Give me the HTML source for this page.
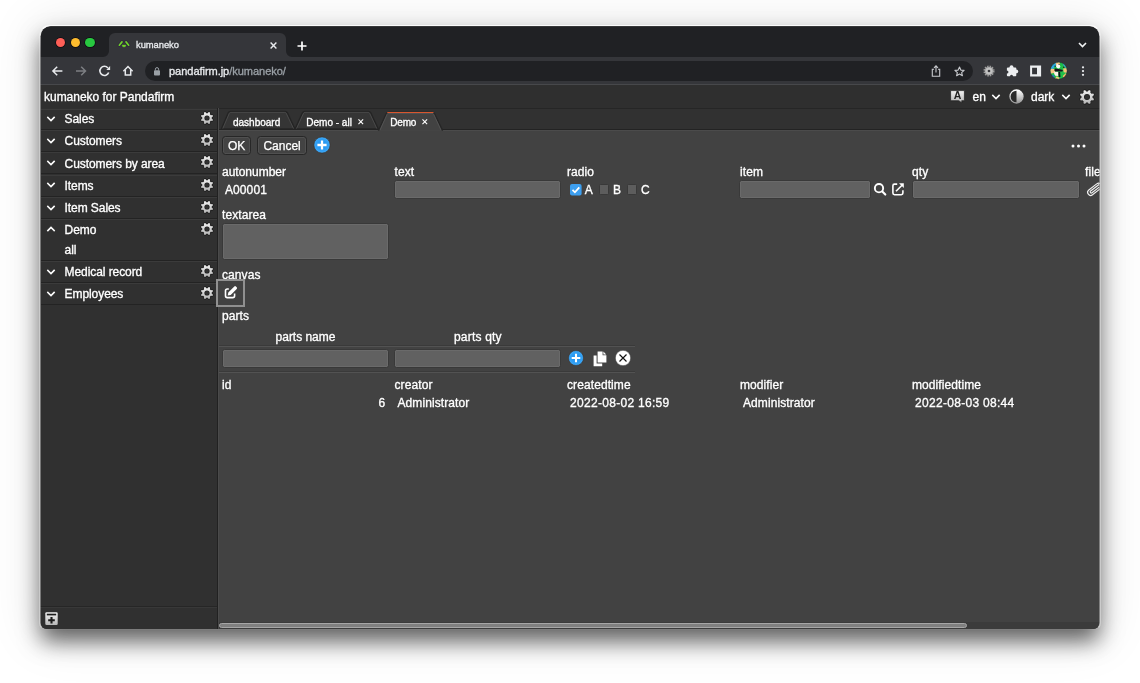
<!DOCTYPE html>
<html lang="en">
<head>
<meta charset="utf-8">
<title>kumaneko</title>
<style>
*{box-sizing:border-box;margin:0;padding:0}
html,body{width:1140px;height:683px;overflow:hidden;background:#fff}
body{position:relative;font-family:"Liberation Sans",Arial,sans-serif;font-size:12px;color:#fff;line-height:1}
.shadow{position:absolute;left:40.6px;top:26.4px;width:1058.8px;height:602.5px;border-radius:10px 10px 6px 6px;background:#333;
 box-shadow:0 12px 22px rgba(0,0,0,.6),0 4px 50px 6px rgba(0,0,0,.1)}
.ring{position:absolute;left:39.4px;top:25.2px;width:1061.2px;height:604.4px;border:1.2px solid rgba(255,255,255,.34);border-top-color:rgba(255,255,255,.85);border-bottom-color:rgba(255,255,255,.06);border-radius:11px 11px 7px 7px}
.win{will-change:transform;position:absolute;left:0;top:0;width:1140px;height:683px;clip-path:inset(26.4px 40.6px 54.1px 40.6px round 10px 10px 6px 6px);background:#424242}
.bg{position:absolute}
.t{position:absolute;white-space:pre;line-height:14px;height:14px;-webkit-text-stroke:.32px currentColor}
.f{letter-spacing:.09px}
svg{position:absolute;overflow:visible}
.row{position:absolute;left:41px;width:176px;height:22px;border-top:1px solid #3b3b3b;border-bottom:1px solid #232323}
.inp{position:absolute;height:19.1px;background:#616161;border:1px solid #393939;border-radius:2.5px;box-shadow:inset 0 0 0 1px #6a6a6a}
.btn{position:absolute;top:135.6px;height:19px;border:1.2px solid #272727;border-radius:3.5px;background:#434343;box-shadow:inset 0 0 0 1px #505050;font-size:12px;line-height:18.2px;text-align:center;-webkit-text-stroke:.25px currentColor}
</style>
</head>
<body>
<svg width="0" height="0" style="left:-10px;top:-10px">
<defs>
<linearGradient id="gg" x1="0" y1="0" x2="0" y2="1"><stop offset="0" stop-color="#f2f2f2"/><stop offset="1" stop-color="#b4b4b4"/></linearGradient>
<symbol id="gear" viewBox="-8 -8 16 16" overflow="visible"><path d="M4.75 0.71L6.08 1.66L5.47 3.12L3.86 2.85L2.85 3.86L3.12 5.47L1.66 6.08L0.71 4.75L-0.71 4.75L-1.66 6.08L-3.12 5.47L-2.85 3.86L-3.86 2.85L-5.47 3.12L-6.08 1.66L-4.75 0.71L-4.75 -0.71L-6.08 -1.66L-5.47 -3.12L-3.86 -2.85L-2.85 -3.86L-3.12 -5.47L-1.66 -6.08L-0.71 -4.75L0.71 -4.75L1.66 -6.08L3.12 -5.47L2.85 -3.86L3.86 -2.85L5.47 -3.12L6.08 -1.66L4.75 -0.71ZM2.60 0A2.60 2.60 0 1 0 -2.60 0A2.60 2.60 0 1 0 2.60 0Z" fill="url(#gg)" fill-rule="evenodd" stroke="#1c1c1c" stroke-width="1.2" stroke-linejoin="round" paint-order="stroke"/></symbol>
<symbol id="chev" viewBox="-5 -5 10 10" overflow="visible"><path d="M-3.1 -1.5L0 1.6L3.1 -1.5" fill="none" stroke="#fff" stroke-width="1.6" stroke-linecap="square"/></symbol>
</defs>
</svg>
<div class="shadow"></div><div class="ring"></div>
<div class="win">
<!-- chrome tab strip -->
<div class="bg" style="left:40px;top:26px;width:1060px;height:31px;background:#202124;border-top:1.5px solid #3c3d40"></div>
<div class="bg" style="left:40px;top:57px;width:1060px;height:27.5px;background:#35363a;border-bottom:1px solid #47484b"></div>
<div class="bg" style="left:109px;top:32.9px;width:177px;height:25px;background:#35363a;border-radius:6px 6px 0 0"></div>
<svg style="left:103px;top:51px" width="6" height="6"><path d="M0 6H6V0A6 6 0 0 1 0 6Z" fill="#35363a"/></svg>
<svg style="left:286px;top:51px" width="6" height="6"><path d="M6 6H0V0A6 6 0 0 0 6 6Z" fill="#35363a"/></svg>
<div class="bg" style="left:55.8px;top:37.8px;width:9.6px;height:9.6px;border-radius:50%;background:#fe5f57;box-shadow:0 0 0 .7px #0d0d12"></div>
<div class="bg" style="left:70.5px;top:37.8px;width:9.6px;height:9.6px;border-radius:50%;background:#febc2e;box-shadow:0 0 0 .7px #0d0d12"></div>
<div class="bg" style="left:85.2px;top:37.8px;width:9.6px;height:9.6px;border-radius:50%;background:#28c840;box-shadow:0 0 0 .7px #0d0d12"></div>
<!-- favicon -->
<svg style="left:116px;top:38px" width="16" height="12" viewBox="116 38 16 12"><g fill="none" stroke="#2b1d3d" stroke-width="3" stroke-linecap="round" opacity=".8"><path d="M119.3 45.2L122 41.9"/><path d="M126 41.9L128.7 45.2"/><path d="M122.8 45.4H125.2"/></g><g fill="none" stroke="#6fd22b" stroke-width="1.7" stroke-linecap="round"><path d="M119.3 45.2L122 41.9"/><path d="M126 41.9L128.7 45.2"/></g><path d="M122.1 45A1.9 1.9 0 0 0 125.9 45Z" fill="#6fd22b" stroke="#6fd22b" stroke-width=".5" stroke-linejoin="round"/></svg>
<div class="t" style="left:136px;top:38px;font-size:9.4px;color:#e8eaed;letter-spacing:-.05px">kumaneko</div>
<svg style="left:270.3px;top:41.9px" width="7" height="7" viewBox="0 0 7 7"><path d="M.6 .6L6.4 6.4M6.4 .6L.6 6.4" stroke="#e8eaed" stroke-width="1.45"/></svg>
<svg style="left:297px;top:40.5px" width="10" height="10" viewBox="0 0 10 10"><path d="M5 .5V9.5M.5 5H9.5" stroke="#fff" stroke-width="1.7"/></svg>
<svg style="left:1078.3px;top:42.4px" width="9" height="6" viewBox="0 0 9 6"><path d="M1 1L4.5 4.5L8 1" fill="none" stroke="#f1f3f4" stroke-width="1.6"/></svg>
<!-- nav icons -->
<svg style="left:52px;top:65.5px" width="11" height="10" viewBox="0 0 11 10"><path d="M5.2 .7L.9 5L5.2 9.3M1 5H10.4" fill="none" stroke="#e8eaed" stroke-width="1.5"/></svg>
<svg style="left:76px;top:65.5px" width="11" height="10" viewBox="0 0 11 10"><path d="M5.2 .7L9.5 5L5.2 9.3M9.4 5H0" fill="none" stroke="#7d7f83" stroke-width="1.5"/></svg>
<svg style="left:98px;top:64px" width="14" height="14" viewBox="98 64 14 14"><path d="M108.7 72.5A4.55 4.55 0 1 1 107.9 67.9" fill="none" stroke="#e8eaed" stroke-width="1.6"/><path d="M110.1 65.9V69.9H106.3Z" fill="#e8eaed"/></svg>
<svg style="left:121px;top:64px" width="14" height="14" viewBox="121 64 14 14"><path d="M123.4 71.3L128 66.6L132.6 71.3" fill="none" stroke="#e8eaed" stroke-width="1.5" stroke-linejoin="miter"/><path d="M125.3 70V74.9H130.7V70" fill="none" stroke="#e8eaed" stroke-width="1.5"/></svg>
<!-- url bar -->
<div class="bg" style="left:144.5px;top:60.5px;width:828px;height:20.5px;border-radius:10.3px;background:#202124"></div>
<svg style="left:154.2px;top:66.8px" width="6" height="8.4" viewBox="0 0 6 8.4"><rect x="0" y="3.2" width="6" height="5.2" rx=".9" fill="#9aa0a6"/><path d="M1.4 3.4V2.2A1.6 1.6 0 0 1 4.6 2.2V3.4" fill="none" stroke="#9aa0a6" stroke-width="1"/></svg>
<div class="t" style="left:169px;top:64px;font-size:11.05px;color:#e8eaed;letter-spacing:-.05px">pandafirm.jp<span style="color:#9aa0a6">/kumaneko/</span></div>
<!-- share -->
<svg style="left:931px;top:65px" width="10" height="12" viewBox="0 0 10 12"><path d="M3 4.2H1.3V11.2H8.7V4.2H7" fill="none" stroke="#c8cace" stroke-width="1.1"/><path d="M5 7.6V1.2M3 2.9L5 .9L7 2.9" fill="none" stroke="#c8cace" stroke-width="1.1"/></svg>
<!-- star -->
<svg style="left:954px;top:65.5px" width="11" height="11" viewBox="0 0 11 11"><path d="M5.5 1.1L6.85 4.1L10.1 4.4L7.65 6.55L8.4 9.75L5.5 8.05L2.6 9.75L3.35 6.55L.9 4.4L4.15 4.1Z" fill="none" stroke="#c8cace" stroke-width="1.1" stroke-linejoin="round"/></svg>
<!-- ext gear -->
<svg style="left:982.6px;top:64.8px" width="12" height="12" viewBox="-6 -6 12 12"><circle r="4.7" fill="none" stroke="#9c9c9c" stroke-width="1.7" stroke-dasharray="1.5 .96"/><circle r="4.1" fill="#b4b4b4"/><circle r="3" fill="#c4c4c4"/><circle r="1.35" fill="#3a3a3e"/></svg>
<!-- puzzle -->
<svg style="left:1005px;top:64px" width="15" height="14" viewBox="1005 64 15 14"><rect x="1006.9" y="67.5" width="9.4" height="8.8" rx="1" fill="#eceef0"/><circle cx="1011.5" cy="67.3" r="1.95" fill="#eceef0"/><circle cx="1016.3" cy="71.4" r="1.9" fill="#eceef0"/><circle cx="1006.9" cy="72" r="1.55" fill="#35363a"/><circle cx="1011.5" cy="76.4" r="1.55" fill="#35363a"/></svg>
<!-- side panel -->
<svg style="left:1029px;top:64px" width="14" height="14" viewBox="1029 64 14 14"><path d="M1030.1 65.6H1041.1V76.4H1030.1ZM1032.1 67.7V74.3H1037V67.7Z" fill="#eceef0" fill-rule="evenodd"/></svg>
<!-- avatar -->
<svg style="left:1050.4px;top:62.2px" width="17.4" height="17.4" viewBox="-8.7 -8.7 17.4 17.4"><defs><clipPath id="avc"><circle r="8.45"/></clipPath></defs><g clip-path="url(#avc)"><rect x="-9" y="-9" width="18" height="18" fill="#1fbf4a"/><path d="M-9 -9H-2L-3 -5L-6 -1.5L-9 -2.5Z" fill="#2aa7e0"/><path d="M3.5 -9H9V-2.5L6 -3.5L4.5 -6Z" fill="#3aa9d8"/><path d="M-9 -2L-4 -1.6L-3.5 2L-9 3.2Z" fill="#f5c583"/><path d="M-3.2 -9H1.2V-5.5L-2.6 -5Z" fill="#f5c583"/><path d="M4.5 -2.2L9 -2.6V2.2L5 1.6Z" fill="#f6bf78"/><path d="M-2 5.5L1 7L0 9H-4.5Z" fill="#f3cf7a"/><path d="M4 5.2L7 2.6L8.4 4.2L5 7.4Z" fill="#f6b866"/><path d="M-8 5L-5 4L-4 7.5L-6.5 7Z" fill="#2a78c8"/><ellipse cx="-.5" cy="-4.5" rx="2" ry="2.2" fill="#fbf7f2"/><path d="M-4.4 .8L-.3 1L-.4 5.4L-3.4 5L-4.6 3Z" fill="#fbf3e8"/><path d="M-4.2 -1.6Q-4 -2.4 -3 -2.2L3.4 -.9Q4.4 -.6 4 .3Q3.6 1 2.6 .9L-3.4 .8Q-4.4 .6 -4.2 -.4Z" fill="#14101a"/><path d="M-.3 1.2L1.4 1.4L1.8 6.4L.2 6.6L-.2 4Z" fill="#14101a"/><circle cx="-3.6" cy="-4.5" r=".65" fill="#111"/><circle cx=".4" cy="-6.4" r=".6" fill="#221"/><circle cx="5" cy="-3.4" r=".75" fill="#221"/></g><circle r="8.5" fill="none" stroke="#221a2c" stroke-width=".6" opacity=".75"/></svg>
<!-- kebab -->
<svg style="left:1080.6px;top:66px" width="4" height="10" viewBox="0 0 4 10"><circle cx="2" cy="1.3" r="1.15" fill="#e8eaed"/><circle cx="2" cy="5.1" r="1.15" fill="#e8eaed"/><circle cx="2" cy="8.8" r="1.15" fill="#e8eaed"/></svg>
<!-- app header -->
<div class="bg" style="left:40px;top:85px;width:1060px;height:23.6px;background:#2f2f2f;border-bottom:1.6px solid #1c1c1c"></div>
<div class="t" style="left:44px;top:90px;font-size:12px;letter-spacing:-.02px">kumaneko for Pandafirm</div>
<!-- translate icon -->
<svg style="left:950.4px;top:90.4px" width="15" height="13.4" viewBox="0 0 15 13.4"><path d="M.6 .6H14.4V10.7H11.7L12 13L8.8 10.7H.6Z" fill="url(#gg)" stroke="#1d1d1d" stroke-width=".7" stroke-linejoin="round"/><text x="7.5" y="9.3" font-family="Liberation Sans, sans-serif" font-size="10.5" font-weight="bold" text-anchor="middle" fill="#222">A</text></svg>
<div class="t" style="left:972.5px;top:90px;font-size:12px">en</div>
<svg style="left:990.5px;top:92px" width="10" height="10"><use href="#chev"/></svg>
<svg style="left:1008.8px;top:88.9px" width="15" height="15" viewBox="-7.5 -7.5 15 15"><defs><linearGradient id="hg" x1="0" y1="0" x2="0" y2="1"><stop offset="0" stop-color="#fff"/><stop offset="1" stop-color="#9a9a9a"/></linearGradient></defs><circle r="6.5" fill="#2a2a2a" stroke="url(#hg)" stroke-width="1.3"/><path d="M0 -6.4A6.4 6.4 0 0 1 0 6.4Z" fill="url(#hg)"/></svg>
<div class="t" style="left:1031px;top:90px;font-size:12px">dark</div>
<svg style="left:1061px;top:92px" width="10" height="10"><use href="#chev"/></svg>
<svg style="left:1078.7px;top:88.7px" width="16" height="16" viewBox="-6.9 -6.9 13.8 13.8"><use href="#gear" x="-8" y="-8" width="16" height="16"/></svg>
<!-- sidebar -->
<div class="bg" style="left:40px;top:108px;width:177px;height:521px;background:#303030"></div>
<div class="bg" style="left:217px;top:108px;width:1.1px;height:521px;background:#212121"></div><div class="bg" style="left:218.1px;top:108px;width:1.1px;height:521px;background:#4a4a4a"></div>
<div class="row" style="top:109.0px;height:21.16px"></div>
<svg style="left:45.9px;top:113.9px" width="10" height="10"><use href="#chev"/></svg>
<div class="t" style="left:64.6px;top:112.2px;letter-spacing:-.08px">Sales</div>
<svg style="left:199.2px;top:110.0px" width="16" height="16"><use href="#gear"/></svg>
<div class="row" style="top:130.2px;height:22.16px"></div>
<svg style="left:45.9px;top:136.1px" width="10" height="10"><use href="#chev"/></svg>
<div class="t" style="left:64.6px;top:134.4px;letter-spacing:-.08px">Customers</div>
<svg style="left:199.2px;top:132.2px" width="16" height="16"><use href="#gear"/></svg>
<div class="row" style="top:152.3px;height:22.16px"></div>
<svg style="left:45.9px;top:158.2px" width="10" height="10"><use href="#chev"/></svg>
<div class="t" style="left:64.6px;top:156.5px;letter-spacing:-.08px">Customers by area</div>
<svg style="left:199.2px;top:154.3px" width="16" height="16"><use href="#gear"/></svg>
<div class="row" style="top:174.5px;height:22.16px"></div>
<svg style="left:45.9px;top:180.4px" width="10" height="10"><use href="#chev"/></svg>
<div class="t" style="left:64.6px;top:178.7px;letter-spacing:-.08px">Items</div>
<svg style="left:199.2px;top:176.5px" width="16" height="16"><use href="#gear"/></svg>
<div class="row" style="top:196.6px;height:22.16px"></div>
<svg style="left:45.9px;top:202.5px" width="10" height="10"><use href="#chev"/></svg>
<div class="t" style="left:64.6px;top:200.8px;letter-spacing:-.08px">Item Sales</div>
<svg style="left:199.2px;top:198.6px" width="16" height="16"><use href="#gear"/></svg>
<div class="row" style="top:218.8px;height:42.10px"></div>
<svg style="left:45.9px;top:223.5px" width="10" height="10"><use href="#chev" transform="rotate(180 5 5)"/></svg>
<div class="t" style="left:64.6px;top:223.0px;letter-spacing:-.08px">Demo</div>
<svg style="left:199.2px;top:220.8px" width="16" height="16"><use href="#gear"/></svg>
<div class="row" style="top:260.8px;height:22.16px"></div>
<svg style="left:45.9px;top:266.7px" width="10" height="10"><use href="#chev"/></svg>
<div class="t" style="left:64.6px;top:265.0px;letter-spacing:-.08px">Medical record</div>
<svg style="left:199.2px;top:262.8px" width="16" height="16"><use href="#gear"/></svg>
<div class="row" style="top:282.9px;height:22.16px"></div>
<svg style="left:45.9px;top:288.8px" width="10" height="10"><use href="#chev"/></svg>
<div class="t" style="left:64.6px;top:287.1px;letter-spacing:-.08px">Employees</div>
<svg style="left:199.2px;top:284.9px" width="16" height="16"><use href="#gear"/></svg>
<div class="t" style="left:64.5px;top:243.2px">all</div>
<div class="bg" style="left:40px;top:606px;width:177px;height:2px;background:#262626;border-bottom:1px solid #383838"></div>
<svg style="left:45.2px;top:611.9px" width="13" height="13.4" viewBox="0 0 13 13.4"><defs><linearGradient id="ig" x1="0" y1="0" x2="0" y2="1"><stop offset="0" stop-color="#f4f4f4"/><stop offset="1" stop-color="#b8b8b8"/></linearGradient></defs><rect x=".3" y=".3" width="12.4" height="12.8" rx="1.3" fill="url(#ig)"/><rect x="1.8" y="1.7" width="9.4" height="1.7" fill="#1c1c1c"/><path d="M6.5 5V11.6M3.2 8.3H9.8" stroke="#1c1c1c" stroke-width="2.1"/></svg>
<!-- content tab bar -->
<div class="bg" style="left:219px;top:108px;width:881px;height:22px;background:#313131;border-top:1px solid #262626"></div>
<div class="bg" style="left:219px;top:130px;width:881px;height:499px;background:#424242"></div>
<div class="bg" style="left:219px;top:128.6px;width:881px;height:1.1px;background:#232323"></div>
<div class="bg" style="left:219px;top:129.7px;width:881px;height:1px;background:#4b4b4b"></div>
<svg style="left:219px;top:108px" width="240" height="24" viewBox="219 108 240 24">
<path d="M221.4 129L228.4 112.6Q229 111.4 230.4 111.4H285.2Q286.6 111.4 287.2 112.6L294.9 129Z" fill="#353535" stroke="#242424" stroke-width="1.5"/>
<path d="M222.8 128.6L229.4 113.2Q229.8 112.4 230.8 112.4H284.8Q285.8 112.4 286.2 113.2L293.5 128.6" fill="none" stroke="#4c4c4c" stroke-width=".9"/>
<path d="M295.1 129L302.6 112.6Q303.2 111.4 304.6 111.4H368.6Q370 111.4 370.6 112.6L378.2 129Z" fill="#353535" stroke="#242424" stroke-width="1.5"/>
<path d="M296.5 128.6L303.6 113.2Q304 112.4 305 112.4H368.2Q369.2 112.4 369.6 113.2L376.8 128.6" fill="none" stroke="#4c4c4c" stroke-width=".9"/>
<path d="M378.8 130.8L386.3 113.6Q387 112.4 388.5 112.4H432.3Q433.8 112.4 434.5 113.6L442.2 130.8Z" fill="#424242"/>
<path d="M378.4 130.6L386.3 113.6Q387 112.4 388.5 112.4H432.3Q433.8 112.4 434.5 113.6L442.6 130.6" fill="none" stroke="#262626" stroke-width="1.4"/>
<path d="M380 130.2L387.2 114.2Q387.6 113.4 388.7 113.4H432.1Q433.2 113.4 433.6 114.2L441 130.2" fill="none" stroke="#555" stroke-width=".9"/>
<path d="M387.3 112.5H433.5" stroke="#d9562e" stroke-width="1.2"/>
</svg>
<div class="t" style="left:233px;top:116.2px;font-size:10px">dashboard</div>
<div class="t" style="left:306.3px;top:116.2px;font-size:10px">Demo - all</div>
<svg style="left:357.8px;top:118.7px" width="5.6" height="5.6" viewBox="0 0 6 6"><path d="M.5 .5L5.5 5.5M5.5 .5L.5 5.5" stroke="#fff" stroke-width="1.2"/></svg>
<div class="t" style="left:390.2px;top:116.2px;font-size:10px;letter-spacing:-.15px">Demo</div>
<svg style="left:421.9px;top:118.7px" width="5.6" height="5.6" viewBox="0 0 6 6"><path d="M.5 .5L5.5 5.5M5.5 .5L.5 5.5" stroke="#fff" stroke-width="1.2"/></svg>
<!-- buttons -->
<div class="btn" style="left:221.9px;width:29.5px">OK</div>
<div class="btn" style="left:257.4px;width:49.4px">Cancel</div>
<svg style="left:313px;top:136.4px" width="18" height="18" viewBox="-9 -9 18 18"><defs><radialGradient id="pg"><stop offset="0" stop-color="#1d8fef"/><stop offset=".55" stop-color="#2a9af2"/><stop offset="1" stop-color="#3fa9f6"/></radialGradient></defs><circle r="8.1" fill="url(#pg)" stroke="#3b2d26" stroke-width=".6"/><path d="M0 -4.6V4.6M-4.6 0H4.6" stroke="#fff" stroke-width="2.3"/></svg>
<svg style="left:1071px;top:144px" width="15" height="4" viewBox="0 0 15 4"><circle cx="2" cy="2" r="1.5" fill="#fff"/><circle cx="7.5" cy="2" r="1.5" fill="#fff"/><circle cx="13" cy="2" r="1.5" fill="#fff"/></svg>
<!-- form -->
<div class="t f" style="left:222px;top:165.4px;letter-spacing:0">autonumber</div>
<div class="t f" style="left:225px;top:183px">A00001</div>
<div class="t f" style="left:394.5px;top:165.4px">text</div>
<div class="inp" style="left:394px;top:180.1px;width:167.4px"></div>
<div class="t f" style="left:567px;top:165.4px">radio</div>
<svg style="left:570px;top:183.7px" width="12" height="12" viewBox="0 0 12 12"><rect width="11.6" height="11.6" rx="2" fill="#3d9ff0"/><path d="M2.5 5.9L4.9 8.3L9.3 3.3" fill="none" stroke="#fff" stroke-width="1.8"/></svg>
<div class="t f" style="left:584.8px;top:183px">A</div>
<div class="bg" style="left:598.7px;top:184px;width:10.6px;height:10.6px;background:#5d5d5d;border:.8px solid #393939;border-radius:1.5px"></div>
<div class="t f" style="left:613px;top:183px">B</div>
<div class="bg" style="left:626.7px;top:184px;width:10.6px;height:10.6px;background:#5d5d5d;border:.8px solid #393939;border-radius:1.5px"></div>
<div class="t f" style="left:641px;top:183px">C</div>
<div class="t f" style="left:740px;top:165.4px">item</div>
<div class="inp" style="left:739.4px;top:180.1px;width:132px"></div>
<svg style="left:872px;top:182px" width="16" height="16" viewBox="872 182 16 16"><circle cx="879" cy="188.2" r="4.15" fill="none" stroke="#fff" stroke-width="1.9"/><path d="M882.3 191.5L885.3 194.6" stroke="#fff" stroke-width="2.1" stroke-linecap="round"/></svg>
<svg style="left:890px;top:181px" width="16" height="16" viewBox="890 181 16 16"><path d="M897.2 184.1H894.5Q892.9 184.1 892.9 185.7V193.1Q892.9 194.7 894.5 194.7H901.3Q902.9 194.7 902.9 193.1V190.3" fill="none" stroke="#fff" stroke-width="1.6"/><path d="M896 191.2L902 185.2" stroke="#fff" stroke-width="1.6"/><path d="M899 183.3H903.8V188.1Z" fill="#fff"/></svg>
<div class="t f" style="left:912px;top:165.4px">qty</div>
<div class="inp" style="left:912px;top:180.1px;width:167.5px"></div>
<div class="t f" style="left:1085px;top:165.4px">file</div>
<svg style="left:1084px;top:180px" width="20" height="20" viewBox="1084 180 20 20"><g transform="translate(1094.6 189.3) rotate(-38)" fill="none" stroke="#f0f0f0" stroke-width="1.15"><rect x="-8" y="-3" width="16" height="6" rx="3"/><path d="M6.5 -1.1H-4.2A1.1 1.1 0 0 0 -4.2 1.1H5"/></g></svg>
<div class="t f" style="left:222px;top:208px">textarea</div>
<div class="inp" style="left:221.6px;top:222.7px;width:167.6px;height:36.9px"></div>
<div class="t f" style="left:222px;top:268px">canvas</div>
<div class="bg" style="left:216px;top:279.1px;width:29px;height:28px;background:#424242;border:2px solid #909090"></div>
<svg style="left:222px;top:284px" width="17" height="17" viewBox="222 284 17 17"><path d="M228.8 289H227.3Q225.5 289 225.5 290.8V295.8Q225.5 297.6 227.3 297.6H232.8Q234.6 297.6 234.6 295.8V293.4" fill="none" stroke="#fff" stroke-width="1.6"/><path d="M227.7 295.5L228.3 292.5L234.3 286.5Q235.1 285.7 235.9 286.5L236.7 287.3Q237.5 288.1 236.7 288.9L230.7 294.9Z" fill="#fff"/></svg>
<div class="t f" style="left:222px;top:309px">parts</div>
<div class="t f" style="left:275.6px;top:330px;letter-spacing:-.03px">parts name</div>
<div class="t f" style="left:454px;top:330px;letter-spacing:.2px">parts qty</div>
<div class="bg" style="left:219px;top:345px;width:416px;height:1px;background:#3a3a3a"></div><div class="bg" style="left:219px;top:346px;width:416px;height:1px;background:#525252"></div>
<div class="bg" style="left:219px;top:371px;width:416px;height:1px;background:#3a3a3a"></div><div class="bg" style="left:219px;top:372px;width:416px;height:1px;background:#525252"></div>
<div class="inp" style="left:221.6px;top:349.4px;width:167.6px"></div>
<div class="inp" style="left:394px;top:349.4px;width:167.4px"></div>
<svg style="left:566.8px;top:349.3px" width="18" height="18" viewBox="-9 -9 18 18"><circle r="7.5" fill="url(#pg)" stroke="#3b2d26" stroke-width=".6"/><path d="M0 -4.3V4.3M-4.3 0H4.3" stroke="#fff" stroke-width="2.1"/></svg>
<svg style="left:592.6px;top:350.6px" width="14" height="16" viewBox="0 0 14 16"><path d="M.6 4.4H3.6V12.4H9.2V15.2H.6Z" fill="#fff"/><path d="M4.6 .4H9.6V4.2H13.4V11.4H4.6Z" fill="#fff"/><path d="M10.4 .6L13.2 3.4H10.4Z" fill="#fff"/></svg>
<svg style="left:613.7px;top:349.3px" width="18" height="18" viewBox="-9 -9 18 18"><circle r="7.7" fill="#fff" stroke="#333" stroke-width=".5"/><path d="M-3.5 -3.5L3.5 3.5M3.5 -3.5L-3.5 3.5" stroke="#111" stroke-width="1.15"/></svg>
<div class="t f" style="left:222px;top:378px">id</div>
<div class="t f" style="left:378.5px;top:395.5px">6</div>
<div class="t f" style="left:394.5px;top:378px">creator</div>
<div class="t f" style="left:397.5px;top:395.5px">Administrator</div>
<div class="t f" style="left:567px;top:378px">createdtime</div>
<div class="t f" style="left:570px;top:395.5px;letter-spacing:.3px">2022-08-02 16:59</div>
<div class="t f" style="left:740px;top:378px">modifier</div>
<div class="t f" style="left:743px;top:395.5px">Administrator</div>
<div class="t f" style="left:912px;top:378px">modifiedtime</div>
<div class="t f" style="left:915px;top:395.5px;letter-spacing:.3px">2022-08-03 08:44</div>
<!-- scrollbar -->
<div class="bg" style="left:219.2px;top:621.6px;width:881px;height:7px;background:#3b3b3b"></div>
<div class="bg" style="left:219.3px;top:622.9px;width:747.4px;height:5.5px;background:#808080;border:.9px solid #a6a6a6;border-radius:2.8px"></div>
</div>
</body>
</html>
